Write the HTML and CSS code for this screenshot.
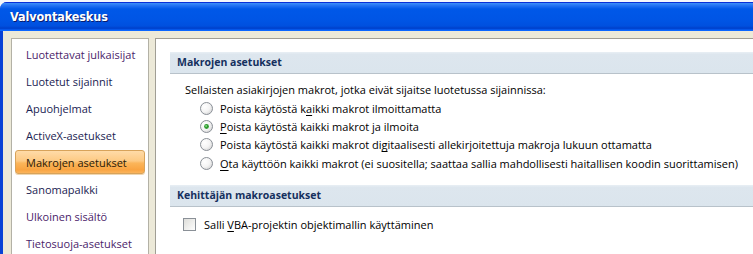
FILE: index.html
```html
<!DOCTYPE html>
<html lang="fi">
<head>
<meta charset="utf-8">
<title>Valvontakeskus</title>
<link rel="stylesheet" href="styles.css">
</head>
<body>
<div class="window">
  <div class="titlebar"><span class="title">Valvontakeskus</span></div>
  <div class="frame">
    <nav class="sidebar">
      <div class="item visited">Luotettavat julkaisijat</div>
      <div class="item">Luotetut sijainnit</div>
      <div class="item">Apuohjelmat</div>
      <div class="item">ActiveX-asetukset</div>
      <div class="item selected">Makrojen asetukset</div>
      <div class="item">Sanomapalkki</div>
      <div class="item visited">Ulkoinen sisältö</div>
      <div class="item visited">Tietosuoja-asetukset</div>
    </nav>
    <main class="main">
      <div class="section-header">Makrojen asetukset</div>
      <div class="section-body">
        <div class="intro">Sellaisten asiakirjojen makrot, jotka eivät sijaitse luotetussa sijainnissa:</div>
        <div class="options">
          <label class="option">
            <svg class="radio" viewBox="0 0 13 13"><defs><radialGradient id="rg1" cx="0.35" cy="0.35" r="0.7"><stop offset="0" stop-color="#ffffff"/><stop offset="0.6" stop-color="#f4f4f4"/><stop offset="1" stop-color="#d8d8d8"/></radialGradient></defs><circle cx="6.5" cy="6.5" r="6" fill="url(#rg1)" stroke="#8a9097" stroke-width="1"/></svg>
            <span>Poista käytöstä k<u>a</u>ikki makrot ilmoittamatta</span>
          </label>
          <label class="option">
            <svg class="radio" viewBox="0 0 13 13"><circle cx="6.5" cy="6.5" r="6" fill="url(#rg1)" stroke="#8a9097" stroke-width="1"/><circle cx="6.5" cy="6.5" r="2.4" fill="#2e9b2e"/><circle cx="6.1" cy="6.1" r="1" fill="#7fd37f"/></svg>
            <span><u>P</u>oista käytöstä kaikki makrot ja ilmoita</span>
          </label>
          <label class="option">
            <svg class="radio" viewBox="0 0 13 13"><circle cx="6.5" cy="6.5" r="6" fill="url(#rg1)" stroke="#8a9097" stroke-width="1"/></svg>
            <span>Poista käytöstä kaikki makrot di<u>g</u>itaalisesti allekirjoitettuja makroja lukuun ottamatta</span>
          </label>
          <label class="option">
            <svg class="radio" viewBox="0 0 13 13"><circle cx="6.5" cy="6.5" r="6" fill="url(#rg1)" stroke="#8a9097" stroke-width="1"/></svg>
            <span><u>O</u>ta käyttöön kaikki makrot (ei suositella; saattaa sallia mahdollisesti haitallisen koodin suorittamisen)</span>
          </label>
        </div>
      </div>
      <div class="section-header second">Kehittäjän makroasetukset</div>
      <label class="check-row">
        <svg class="checkbox" viewBox="0 0 13 13"><defs><linearGradient id="cg" x1="0" y1="0" x2="1" y2="1"><stop offset="0" stop-color="#dcdcd8"/><stop offset="1" stop-color="#ffffff"/></linearGradient></defs><rect x="0.5" y="0.5" width="12" height="12" fill="url(#cg)" stroke="#8a9097"/></svg>
        <span>Salli <u>V</u>BA-projektin objektimallin käyttäminen</span>
      </label>
    </main>
  </div>
</div>
</body>
</html>
```
FILE: styles.css
```css
html, body {
  margin: 0;
  height: 254px;
  overflow: hidden;
}
body {
  background: #f4f7fb;
  font-family: "Open Sans", "Noto Sans", sans-serif;
  font-size: 11px;
  color: #000;
}
.window {
  margin-top: 2px;
  height: 252px;
  display: flex;
  flex-direction: column;
  border-top-left-radius: 7px;
  overflow: hidden;
  background: #0842d6;
}
.titlebar {
  height: 29px;
  flex: none;
  display: flex;
  align-items: center;
  padding-left: 10px;
  padding-bottom: 1px;
  box-sizing: border-box;
  background: linear-gradient(to bottom,
    #0831d9 0px, #0831d9 1px,
    #3d8ff8 1px, #1e6ef2 4px,
    #0058e8 7px, #0055e5 18px,
    #0050df 24px, #0041cc 26px,
    #0046d4 27px, #0a66ff 28px, #0a66ff 29px);
}
.title {
  font-family: "DejaVu Sans Condensed", "DejaVu Sans", sans-serif;
  font-weight: bold;
  font-size: 12.5px;
  color: #fff;
  text-shadow: 1px 1px 0 #0a1c6e;
  letter-spacing: -0.1px;
}
.frame {
  flex: 1;
  display: flex;
  gap: 6px;
  background: #ece9d8;
  margin-left: 3px;
  padding: 7px 0 0 8px;
  min-height: 0;
}
.sidebar {
  width: 136px;
  flex: none;
  background: #fff;
  border: 1px solid #b3b1a6;
  border-bottom: none;
  padding-top: 3px;
}
.item {
  height: 24px;
  line-height: 24px;
  margin: 0 3px 3px 3px;
  padding-left: 10px;
  color: #1a2352;
  border: 1px solid transparent;
  border-radius: 3px;
  box-sizing: border-box;
  white-space: nowrap;
}
.item.visited {
  color: #4a1c6a;
}
.item.selected {
  color: #2a1a08;
  border-color: #d8a35a;
  background: linear-gradient(to bottom, #ffdba8 0%, #fdca84 45%, #fbb55a 55%, #f9a442 85%, #fbb45c 100%);
  box-shadow: 0 1px 0 #f0d6b0;
}
.main {
  flex: 1;
  background: #fff;
  border-top: 1px solid #a09e94;
  border-left: 1px solid #a09e94;
  padding: 13px 0 0 14px;
  min-width: 0;
}
.section-header {
  height: 21px;
  line-height: 21px;
  padding-left: 7px;
  font-weight: bold;
  font-size: 10.5px;
  color: #15305e;
  background: linear-gradient(to bottom, #e6edf3 0, #e6edf3 1px, #dde6ee 2px, #dbe5ed 100%);
  border-bottom: 1px solid #b8c2ca;
  white-space: nowrap;
}
.section-header.second {
  margin-top: 13px;
}
.section-body {
  padding: 7px 0 0 15px;
}
.intro {
  height: 18px;
  line-height: 18px;
  white-space: nowrap;
}
.options {
  padding-left: 15px;
  display: flex;
  flex-direction: column;
}
.option {
  display: flex;
  align-items: center;
  gap: 7px;
  height: 18.3px;
  white-space: nowrap;
}
.radio {
  width: 13px;
  height: 13px;
  flex: none;
}
.check-row {
  display: flex;
  align-items: center;
  gap: 8px;
  height: 18px;
  margin-top: 8px;
  padding-left: 13px;
  white-space: nowrap;
}
.checkbox {
  width: 13px;
  height: 13px;
  flex: none;
}
u {
  text-decoration-thickness: 1px;
  text-underline-offset: 2px;
}
```
